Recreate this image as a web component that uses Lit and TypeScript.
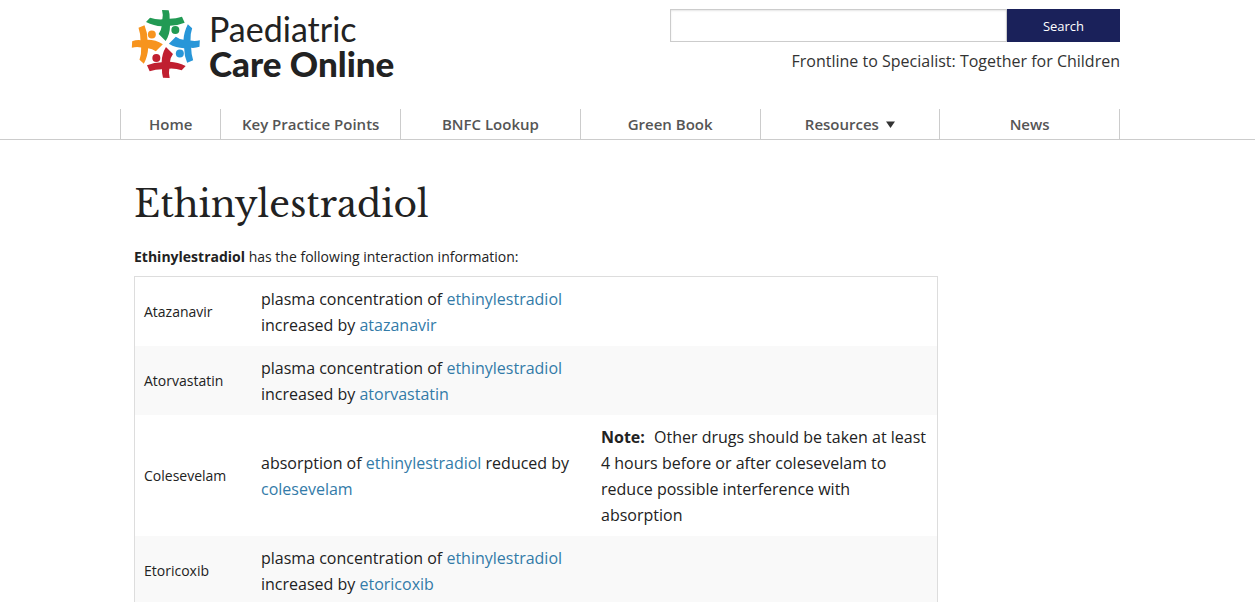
import { LitElement, html, css, svg, nothing, type TemplateResult } from "lit";
import { customElement } from "lit/decorators.js";

interface NavItem {
  label: string;
  menu?: boolean;
  narrow?: boolean;
}

interface Interaction {
  drug: string;
  text: TemplateResult;
  note?: string;
}

const link = (name: string) => html`<a href="#${name}">${name}</a>`;

const NAV: NavItem[] = [
  { label: "Home", narrow: true },
  { label: "Key Practice Points" },
  { label: "BNFC Lookup" },
  { label: "Green Book" },
  { label: "Resources", menu: true },
  { label: "News" },
];

const INTERACTIONS: Interaction[] = [
  {
    drug: "Atazanavir",
    text: html`plasma concentration of ${link("ethinylestradiol")} increased by ${link("atazanavir")}`,
  },
  {
    drug: "Atorvastatin",
    text: html`plasma concentration of ${link("ethinylestradiol")} increased by ${link("atorvastatin")}`,
  },
  {
    drug: "Colesevelam",
    text: html`absorption of ${link("ethinylestradiol")} reduced by ${link("colesevelam")}`,
    note: "Other drugs should be taken at least 4 hours before or after colesevelam to reduce possible interference with absorption",
  },
  {
    drug: "Etoricoxib",
    text: html`plasma concentration of ${link("ethinylestradiol")} increased by ${link("etoricoxib")}`,
  },
];

/* Four identical figures, each turned a quarter round the centre. */
const FIGURES = [
  { colour: "#229a54", angle: 0 },
  { colour: "#2896d8", angle: 90 },
  { colour: "#c01f30", angle: 180 },
  { colour: "#f7941e", angle: 270 },
];

@customElement("site-logo")
export class SiteLogo extends LitElement {
  static styles = css`
    :host {
      display: block;
    }
    .logo {
      display: flex;
      align-items: flex-start;
      gap: 8px;
      color: #222;
      text-decoration: none;
    }
    .mark {
      width: 70px;
      height: 70px;
      flex: none;
    }
    .name {
      display: flex;
      flex-direction: column;
      font-family: Lato, sans-serif;
      font-size: 34px;
      line-height: 35px;
      padding-top: 2px;
      white-space: nowrap;
    }
    .strong {
      font-size: 35px;
      font-weight: 900;
    }
  `;

  render() {
    return html`
      <a class="logo" href="#home">
        <svg class="mark" viewBox="21 27 210 210" aria-hidden="true">
          ${FIGURES.map(
            ({ colour, angle }) => svg`
              <g fill=${colour} transform="rotate(${angle} 125.5 132)">
                <path d="M114 30L134 31Q138 43 137 56Q156 56 174 50L182 68Q160 77 138 77Q138 102 125 123L104 102Q112 91 113 79Q90 78 66 66L78 53Q95 59 115 58Q118 44 114 30Z" />
                <circle cx="154" cy="90" r="12" />
              </g>
            `,
          )}
        </svg>
        <span class="name">
          <span>Paediatric</span>
          <span class="strong">Care Online</span>
        </span>
      </a>
    `;
  }
}

@customElement("app-root")
export class AppRoot extends LitElement {
  static styles = css`
    :host {
      display: block;
      font-family: "Open Sans", sans-serif;
      font-size: 16px;
      line-height: 26px;
      color: #222;
      background: #fff;
    }
    .band {
      padding-right: 15px;
    }
    .wrap {
      max-width: 1000px;
      margin: 0 auto;
      box-sizing: border-box;
    }
    .top {
      display: flex;
      justify-content: space-between;
      align-items: flex-start;
      padding: 9px 0 28px 11px;
    }
    .side {
      width: 450px;
    }
    .search {
      display: flex;
      margin: 0 0 6px;
    }
    .field {
      flex: 1;
      min-width: 0;
      height: 33px;
      box-sizing: border-box;
      margin: 0;
      padding: 4px 8px;
      border: 1px solid #ccc;
      border-radius: 0;
      box-shadow: inset 0 1px 2px rgba(0, 0, 0, 0.1);
      font: inherit;
      background: #fff;
    }
    .submit {
      width: 113px;
      height: 33px;
      border: 0;
      padding: 0;
      background: #1a215a;
      color: #fff;
      font-family: inherit;
      font-size: 13px;
      cursor: pointer;
    }
    .tagline {
      margin: 0;
      text-align: right;
      color: #333;
    }
    .nav {
      border-bottom: 1px solid #ccc;
    }
    .menu {
      display: flex;
      list-style: none;
      padding: 0;
      border-right: 1px solid #ccc;
    }
    .item {
      flex: 180 1 0;
      border-left: 1px solid #ccc;
      box-sizing: border-box;
    }
    .item.narrow {
      flex-grow: 100;
    }
    .entry {
      display: flex;
      align-items: center;
      justify-content: center;
      gap: 7px;
      height: 30px;
      font-size: 15px;
      font-weight: 600;
      color: #555;
      text-decoration: none;
      white-space: nowrap;
    }
    .caret {
      width: 9px;
      height: 7px;
    }
    .content {
      padding: 37px 14px;
    }
    .title {
      margin: 0 0 11px;
      font-family: "Libre Baskerville", "Liberation Serif", serif;
      font-size: 36px;
      line-height: 56px;
      font-weight: 400;
    }
    .intro {
      margin: 0 0 6px;
      font-size: 14px;
    }
    .table {
      width: 100%;
      max-width: 804px;
      border: 1px solid #ddd;
      border-collapse: separate;
      border-spacing: 0;
      table-layout: fixed;
    }
    .col-drug {
      width: 117px;
    }
    .col-text {
      width: 340px;
    }
    .row:nth-child(even) {
      background: #f9f9f9;
    }
    .cell {
      padding: 9px 9px 8px;
      text-align: left;
      font-weight: 400;
      vertical-align: middle;
    }
    .drug {
      font-size: 14px;
    }
    .note {
      margin-right: 5px;
    }
    .table a {
      color: #337ba8;
      text-decoration: none;
    }
  `;

  render() {
    return html`
      <header>
        <div class="band">
          <div class="wrap top">
            <site-logo></site-logo>
            <div class="side">
              <form class="search" role="search" @submit=${(e: Event) => e.preventDefault()}>
                <input class="field" type="text" name="q" aria-label="Search" />
                <button class="submit" type="submit">Search</button>
              </form>
              <p class="tagline">Frontline to Specialist: Together for Children</p>
            </div>
          </div>
        </div>
        <nav class="nav band">
          <ul class="wrap menu">
            ${NAV.map(
              (item) => html`
                <li class="item ${item.narrow ? "narrow" : ""}">
                  <a class="entry" href="#">
                    ${item.label}
                    ${item.menu
                      ? html`<svg class="caret" viewBox="0 0 9 7" aria-hidden="true"><path d="M0 0.500H9L4.500 7Z" fill="#333" /></svg>`
                      : nothing}
                  </a>
                </li>
              `,
            )}
          </ul>
        </nav>
      </header>
      <main class="band">
        <div class="wrap content">
          <h1 class="title">Ethinylestradiol</h1>
          <p class="intro"><strong>Ethinylestradiol</strong> has the following interaction information:</p>
          <table class="table">
            <colgroup>
              <col class="col-drug" />
              <col class="col-text" />
              <col />
            </colgroup>
            <tbody>
              ${INTERACTIONS.map(
                (row) => html`
                  <tr class="row">
                    <th class="cell drug" scope="row">${row.drug}</th>
                    <td class="cell">${row.text}</td>
                    <td class="cell">
                      ${row.note ? html`<strong class="note">Note:</strong> ${row.note}` : nothing}
                    </td>
                  </tr>
                `,
              )}
            </tbody>
          </table>
        </div>
      </main>
    `;
  }
}
